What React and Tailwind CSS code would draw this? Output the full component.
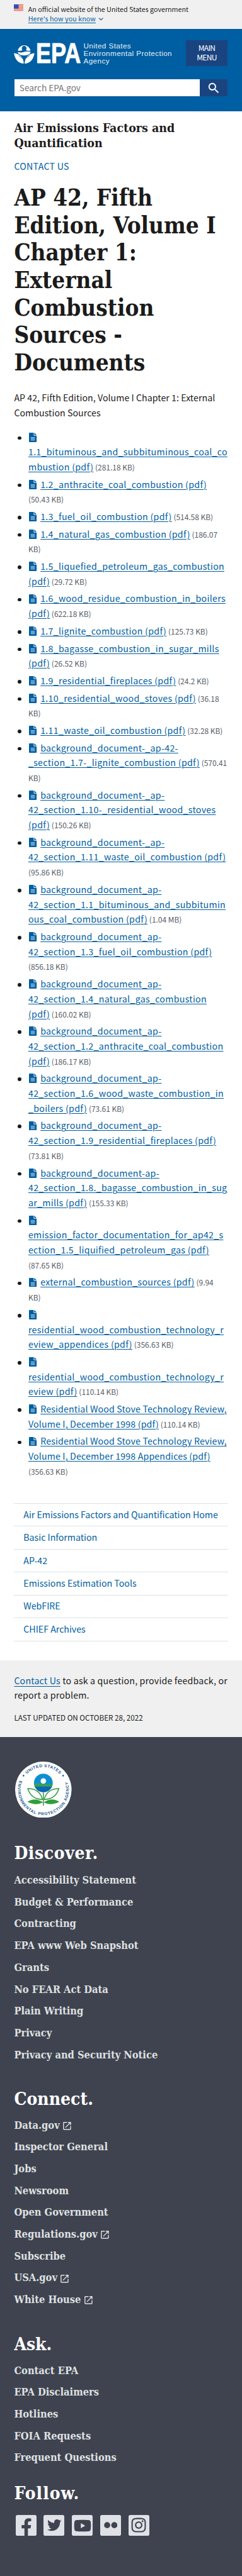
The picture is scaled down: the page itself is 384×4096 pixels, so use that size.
import React from "react";
import { MdLaunch, MdSearch } from "react-icons/md";
import { FaFacebookF, FaTwitter, FaYoutube, FaInstagram } from "react-icons/fa";

const documents = [
  { lines: ["", "1.1_bituminous_and_subbituminous_coal_co", "mbustion (pdf)"], size: ["(281.18 KB)"] },
  { lines: ["1.2_anthracite_coal_combustion (pdf)"], size: ["", "(50.43 KB)"] },
  { lines: ["1.3_fuel_oil_combustion (pdf)"], size: ["(514.58 KB)"] },
  { lines: ["1.4_natural_gas_combustion (pdf)"], size: ["(186.07", "KB)"] },
  { lines: ["1.5_liquefied_petroleum_gas_combustion", "(pdf)"], size: ["(29.72 KB)"] },
  { lines: ["1.6_wood_residue_combustion_in_boilers", "(pdf)"], size: ["(622.18 KB)"] },
  { lines: ["1.7_lignite_combustion (pdf)"], size: ["(125.73 KB)"] },
  { lines: ["1.8_bagasse_combustion_in_sugar_mills", "(pdf)"], size: ["(26.52 KB)"] },
  { lines: ["1.9_residential_fireplaces (pdf)"], size: ["(24.2 KB)"] },
  { lines: ["1.10_residential_wood_stoves (pdf)"], size: ["(36.18", "KB)"] },
  { lines: ["1.11_waste_oil_combustion (pdf)"], size: ["(32.28 KB)"] },
  { lines: ["background_document-_ap-42-", "_section_1.7-_lignite_combustion (pdf)"], size: ["(570.41", "KB)"] },
  { lines: ["background_document-_ap-", "42_section_1.10-_residential_wood_stoves", "(pdf)"], size: ["(150.26 KB)"] },
  { lines: ["background_document-_ap-", "42_section_1.11_waste_oil_combustion (pdf)"], size: ["", "(95.86 KB)"] },
  { lines: ["background_document_ap-", "42_section_1.1_bituminous_and_subbitumin", "ous_coal_combustion (pdf)"], size: ["(1.04 MB)"] },
  { lines: ["background_document_ap-", "42_section_1.3_fuel_oil_combustion (pdf)"], size: ["", "(856.18 KB)"] },
  { lines: ["background_document_ap-", "42_section_1.4_natural_gas_combustion", "(pdf)"], size: ["(160.02 KB)"] },
  { lines: ["background_document_ap-", "42_section_1.2_anthracite_coal_combustion", "(pdf)"], size: ["(186.17 KB)"] },
  { lines: ["background_document_ap-", "42_section_1.6_wood_waste_combustion_in", "_boilers (pdf)"], size: ["(73.61 KB)"] },
  { lines: ["background_document_ap-", "42_section_1.9_residential_fireplaces (pdf)"], size: ["", "(73.81 KB)"] },
  { lines: ["background_document-ap-", "42_section_1.8._bagasse_combustion_in_sug", "ar_mills (pdf)"], size: ["(155.33 KB)"] },
  { lines: ["", "emission_factor_documentation_for_ap42_s", "ection_1.5_liquified_petroleum_gas (pdf)"], size: ["", "(87.65 KB)"] },
  { lines: ["external_combustion_sources (pdf)"], size: ["(9.94", "KB)"] },
  { lines: ["", "residential_wood_combustion_technology_r", "eview_appendices (pdf)"], size: ["(356.63 KB)"] },
  { lines: ["", "residential_wood_combustion_technology_r", "eview (pdf)"], size: ["(110.14 KB)"] },
  { plain: true, lines: ["Residential Wood Stove Technology Review,", "Volume I, December 1998 (pdf)"], size: ["(110.14 KB)"] },
  { plain: true, lines: ["Residential Wood Stove Technology Review,", "Volume I, December 1998 Appendices (pdf)"], size: ["", "(356.63 KB)"] },
];

const sideNav = [
  "Air Emissions Factors and Quantification Home",
  "Basic Information",
  "AP-42",
  "Emissions Estimation Tools",
  "WebFIRE",
  "CHIEF Archives",
];

const discover = [
  "Accessibility Statement",
  "Budget & Performance",
  "Contracting",
  "EPA www Web Snapshot",
  "Grants",
  "No FEAR Act Data",
  "Plain Writing",
  "Privacy",
  "Privacy and Security Notice",
];

const connect = [
  "Data.gov",
  "Inspector General",
  "Jobs",
  "Newsroom",
  "Open Government",
  "Regulations.gov",
  "Subscribe",
  "USA.gov",
  "White House",
];

const ask = ["Contact EPA", "EPA Disclaimers", "Hotlines", "FOIA Requests", "Frequent Questions"];

const external = new Set(["Data.gov", "Regulations.gov", "USA.gov", "White House"]);

function Flag() {
  return (
    <svg className="mt-[8px] h-[11px] w-[16px] shrink-0" viewBox="0 0 16 11">
      <rect width="16" height="11" fill="#fff" />
      {[0, 2, 4, 6, 8, 10].map((y) => (
        <rect key={y} y={y} width="16" height="1" fill="#db3e1f" />
      ))}
      <rect width="8" height="7" fill="#1e33b1" />
      {[1, 3, 5].map((y) =>
        [1, 3, 5, 7].map((x) => <circle key={`${x}-${y}`} cx={x - 0.1} cy={y + 0.3} r="0.45" fill="#fff" />)
      )}
    </svg>
  );
}

function EpaFlower() {
  return (
    <svg className="h-[36px] w-[36px] shrink-0" viewBox="0 0 36 36">
      <g fill="#fff">
        <path d="M6.6 13.2 A11.4 12.6 0 0 1 28.4 13.2 Q23 14.6 20.4 12.4 Q22.2 10.6 21.3 7.9 Q20 5.3 17.5 5.3 Q15 5.3 13.7 7.9 Q12.8 10.6 14.6 12.4 Q12 14.6 6.6 13.2 Z" />
        <path d="M6.3 15.6 Q12 17.4 17.5 15.6 Q23 13.8 28.7 15.6 Q27.6 21.4 17.5 21.6 Q7.4 21.4 6.3 15.6 Z" />
        <path d="M0 17.6 C9.5 18.8 16 23.5 17 35.4 C8 35 2.5 30 0 17.6 Z" />
        <path d="M35.2 17.6 C25.6 18.8 19.2 23.5 18.2 35.4 C27 35 32.6 30 35.2 17.6 Z" />
      </g>
      <circle cx="17.5" cy="8.2" r="2.6" fill="#005ea2" />
      <path d="M8 21.6 L17.5 28.4 L27 21.6" fill="none" stroke="#005ea2" strokeWidth="0.9" />
    </svg>
  );
}

function EpaWordmark() {
  return (
    <svg className="-mt-[11px] h-[58px] w-[79px] shrink-0" viewBox="0 -11 79 58">
      <text
        transform="translate(1 34.7) scale(0.805 1)"
        fill="#fff"
        stroke="#fff"
        strokeWidth="1"
        className="font-['Liberation_Sans',sans-serif] text-[48px] font-bold tracking-normal"
      >
        EPA
      </text>
    </svg>
  );
}

function DocIcon() {
  return (
    <svg className="ml-[1.6px] mr-[6px] mt-[4.4px] h-[16px] w-[13px] shrink-0" viewBox="0 0 13 16">
      <path d="M1 0 H8 V4.2 Q8 5 8.8 5 H13 V15 Q13 16 12 16 H1 Q0 16 0 15 V1 Q0 0 1 0 Z" fill="#005ea2" />
      <path d="M9 0 L13 4 H9 Z" fill="#005ea2" />
      <path d="M3 8.2 H10 M3 10.4 H10 M3 12.6 H10" stroke="#dbe9f5" strokeWidth="1" />
    </svg>
  );
}

function DocumentItem({ doc }) {
  const last = doc.lines.length - 1;
  return (
    <li className="flex">
      <span className="ml-[6px] mr-[12.2px] mt-[10.8px] size-[6px] shrink-0 rounded-full bg-[#1b1b1b]" />
      <div>
        {doc.lines.map((line, i) => (
          <div key={i} className="flex h-[25.44px] whitespace-nowrap leading-[25.44px]">
            {i === 0 && <DocIcon />}
            <a
              className={
                doc.plain
                  ? "tracking-[0.17px] text-[#005ea2] underline decoration-1 underline-offset-[2px]"
                  : "tracking-[0.33px] text-[#005ea2] underline decoration-1 underline-offset-[2px]"
              }
            >
              {line}
            </a>
            {i === last && doc.size[0] && <span className="ml-[3px] text-[12.8px] text-[#565c65]">{doc.size[0]}</span>}
          </div>
        ))}
        {doc.size[1] && (
          <div className="h-[25.44px] text-[12.8px] leading-[25.44px] text-[#565c65]">{doc.size[1]}</div>
        )}
      </div>
    </li>
  );
}

function Seal() {
  return (
    <svg className="ml-[2px] block size-[96px]" viewBox="0 0 96 96">
      <defs>
        <path id="seal-top" d="M9.5 48 A38.5 38.5 0 0 1 86.5 48" />
        <path id="seal-bottom" d="M8.6 29.5 A43.5 43.5 0 1 0 87.4 29.5" />
        <clipPath id="seal-ball">
          <circle cx="48" cy="36.5" r="16" />
        </clipPath>
      </defs>
      <circle cx="48" cy="48" r="48" fill="#fff" />
      <g fill="#1d5a93" className="font-['Liberation_Sans',sans-serif] text-[7px] font-bold">
        <text textLength="62" textAnchor="middle">
          <textPath href="#seal-top" startOffset="50%">UNITED STATES</textPath>
        </text>
        <text textLength="166">
          <textPath href="#seal-bottom" startOffset="3">ENVIRONMENTAL PROTECTION AGENCY</textPath>
        </text>
      </g>
      <circle cx="14.3" cy="24" r="1.4" fill="#1d5a93" />
      <circle cx="81.7" cy="24" r="1.4" fill="#1d5a93" />
      <g clipPath="url(#seal-ball)">
        <rect x="30" y="18" width="36" height="22" fill="#0e8fd3" />
        <path d="M30 37.5 Q39 36.5 48 37.8 Q57 39 66 37.5 V44 H30 Z" fill="#3a9e5c" />
        <rect x="30" y="42.6" width="36" height="12" fill="#0b68b0" />
      </g>
      <circle cx="48" cy="33" r="4.7" fill="#fff" />
      <g fill="none" stroke="#339a41" strokeWidth="1.6">
        <path d="M21.6 46 Q42 46 46.5 64.5 Q27 64 21.6 46 Z" />
        <path d="M74.4 46 Q54 46 49.5 64.5 Q69 64 74.4 46 Z" />
        <path d="M48 53 V75" />
      </g>
      <path d="M21 68.5 Q34 60 47.5 69.5 Q36 76 21 68.5 Z M75 68.5 Q62 60 48.5 69.5 Q60 76 75 68.5 Z" fill="#2f9e3a" />
    </svg>
  );
}

function FooterHeading({ children }) {
  return (
    <h2 className="h-[36px] text-[30px] leading-[36px] font-bold whitespace-nowrap text-white">{children}</h2>
  );
}

function FooterLinks({ items }) {
  return (
    <ul>
      {items.map((item) => (
        <li key={item} className="flex h-[37.17px] items-center text-[17.5px] font-bold whitespace-nowrap text-[#dfe1e2]">
          {item}
          {external.has(item) && <MdLaunch className="ml-[3.5px] mt-[2px] size-[18px]" />}
        </li>
      ))}
    </ul>
  );
}

function Social({ children, end }) {
  return (
    <li
      className={
        end
          ? "flex size-[35.5px] items-end justify-center overflow-hidden rounded-[3px] bg-[#dfe1e7]"
          : "flex size-[35.5px] items-center justify-center rounded-[3px] bg-[#dfe1e7]"
      }
    >
      {children}
    </li>
  );
}

export default function App() {
  return (
    <div className="bg-white font-['Noto_Sans_CJK_SC',sans-serif] text-[15.2px] leading-[25.44px] text-[#1b1b1b] [zoom:0.9332]">
      <section className="flex h-[49px] bg-[#f0f0f0] pl-[24px]">
        <Flag />
        <div className="ml-[8px] pt-[7.5px] text-[11.5px] leading-[16.2px] whitespace-nowrap">
          <p>An official website of the United States government</p>
          <p className="flex items-center">
            <a className="tracking-[0.05px] text-[#005ea2] underline decoration-1 underline-offset-[2px]">
              Here's how you know
            </a>
            <svg className="mt-[2px] ml-[4px] h-[5px] w-[9px]" viewBox="0 0 9 5">
              <path d="M1 0.8 L4.5 3.9 L8 0.8" fill="none" stroke="#2b6ea8" strokeWidth="1.5" />
            </svg>
          </p>
        </div>
      </section>

      <header className="h-[141px] bg-[#005ea2] px-[24px] pt-[19.5px]">
        <div className="flex h-[44px]">
          <div className="flex items-start pt-[4px]">
            <EpaFlower />
            <EpaWordmark />
            <p className="-mt-[0.5px] ml-[3px] font-['Liberation_Sans',sans-serif] text-[12.5px] leading-[12.7px] tracking-[0.46px] whitespace-nowrap text-[#e6f1f9]">
              United States
              <br />
              Environmental Protection
              <br />
              Agency
            </p>
          </div>
          <button className="mr-[0.5px] ml-auto flex w-[71px] flex-col items-center justify-center bg-[#1a4480] text-[13px] leading-[16px] tracking-[-0.8px] text-white">
            <span>MAIN</span>
            <span>MENU</span>
          </button>
        </div>
        <form className="mt-[22.5px] flex h-[29.5px]">
          <div className="ml-[1px] flex flex-1 items-center bg-white pl-[8px] text-[14.6px] text-[#757575]">Search EPA.gov</div>
          <span className="mr-[0.5px] flex w-[47px] items-center justify-center bg-[#1a4480]">
            <MdSearch className="size-[24px] text-white" />
          </span>
        </form>
      </header>

      <main className="px-[24px]">
        <h2 className="pt-[15.6px] font-['DejaVu_Serif_Condensed','DejaVu_Serif',serif] text-[20.8px] leading-[26.3px] font-bold whitespace-nowrap">
          Air Emissions Factors and
          <br />
          Quantification
        </h2>
        <p className="mt-[13.4px] tracking-[0.3px] text-[#005ea2]">CONTACT US</p>
        <h1 className="mt-[16.9px] font-['DejaVu_Serif_Condensed','DejaVu_Serif',serif] text-[39.2px] leading-[46.8px] font-bold whitespace-nowrap">
          AP 42, Fifth
          <br />
          Edition, Volume I
          <br />
          Chapter 1:
          <br />
          External
          <br />
          Combustion
          <br />
          Sources -
          <br />
          Documents
        </h1>
        <p className="mt-[24.2px] tracking-[0.05px] whitespace-nowrap">
          AP 42, Fifth Edition, Volume I Chapter 1: External
          <br />
          Combustion Sources
        </p>
        <ul className="mt-[16px] flex flex-col gap-[4.2px]">
          {documents.map((doc, i) => (
            <DocumentItem key={i} doc={doc} />
          ))}
        </ul>
        <nav className="mt-[41px] border-t border-[#dfe1e2]">
          {sideNav.map((item) => (
            <a key={item} className="flex h-[39.05px] items-center border-b border-[#dfe1e2] pl-[16px] whitespace-nowrap text-[#005ea2]">
              {item}
            </a>
          ))}
        </nav>
      </main>

      <section className="mt-[32.2px] h-[131px] bg-[#f0f0f0] pt-[22.6px] pl-[24px] whitespace-nowrap">
        <p className="tracking-[0.2px]">
          <a className="text-[#005ea2] underline decoration-1 underline-offset-[3px]">Contact Us</a> to ask a question, provide
          feedback, or
          <br />
          report a problem.
        </p>
        <p className="mt-[16px] text-[12.5px] leading-[18px]">LAST UPDATED ON OCTOBER 28, 2022</p>
      </section>

      <footer className="h-[1429.5px] bg-[#3f434f] pt-[41.5px] pl-[24px] font-['DejaVu_Serif_Condensed','DejaVu_Serif',serif]">
        <Seal />
        <div className="mt-[42.5px]">
          <FooterHeading>
            <span className="tracking-[0.67px]">Discover.</span>
          </FooterHeading>
          <div className="mt-[10px]">
            <FooterLinks items={discover} />
          </div>
        </div>
        <div className="mt-[38.7px]">
          <FooterHeading>
            <span className="tracking-[0.05px]">Connect.</span>
          </FooterHeading>
          <div className="mt-[8.2px]">
            <FooterLinks items={connect} />
          </div>
        </div>
        <div className="mt-[39.4px]">
          <FooterHeading>
            <span>Ask.</span>
          </FooterHeading>
          <div className="mt-[8.4px]">
            <FooterLinks items={ask} />
          </div>
        </div>
        <div className="mt-[23.6px]">
          <FooterHeading>
            <span className="tracking-[1.1px]">Follow.</span>
          </FooterHeading>
          <ul className="mt-[19px] ml-[2.3px] flex gap-[12.5px] text-[#3f434f]">
            <Social end>
              <FaFacebookF className="mb-[-1px] ml-[1px] h-[31px] w-[19px]" />
            </Social>
            <Social>
              <FaTwitter className="size-[24px]" />
            </Social>
            <Social>
              <FaYoutube className="size-[30px]" />
            </Social>
            <Social>
              <svg className="h-[11px] w-[23px]" viewBox="0 0 23 11">
                <circle cx="5.4" cy="5.5" r="5.2" fill="currentColor" />
                <circle cx="17.6" cy="5.5" r="5.2" fill="currentColor" />
              </svg>
            </Social>
            <Social>
              <FaInstagram className="size-[28px]" />
            </Social>
          </ul>
        </div>
      </footer>
    </div>
  );
}
